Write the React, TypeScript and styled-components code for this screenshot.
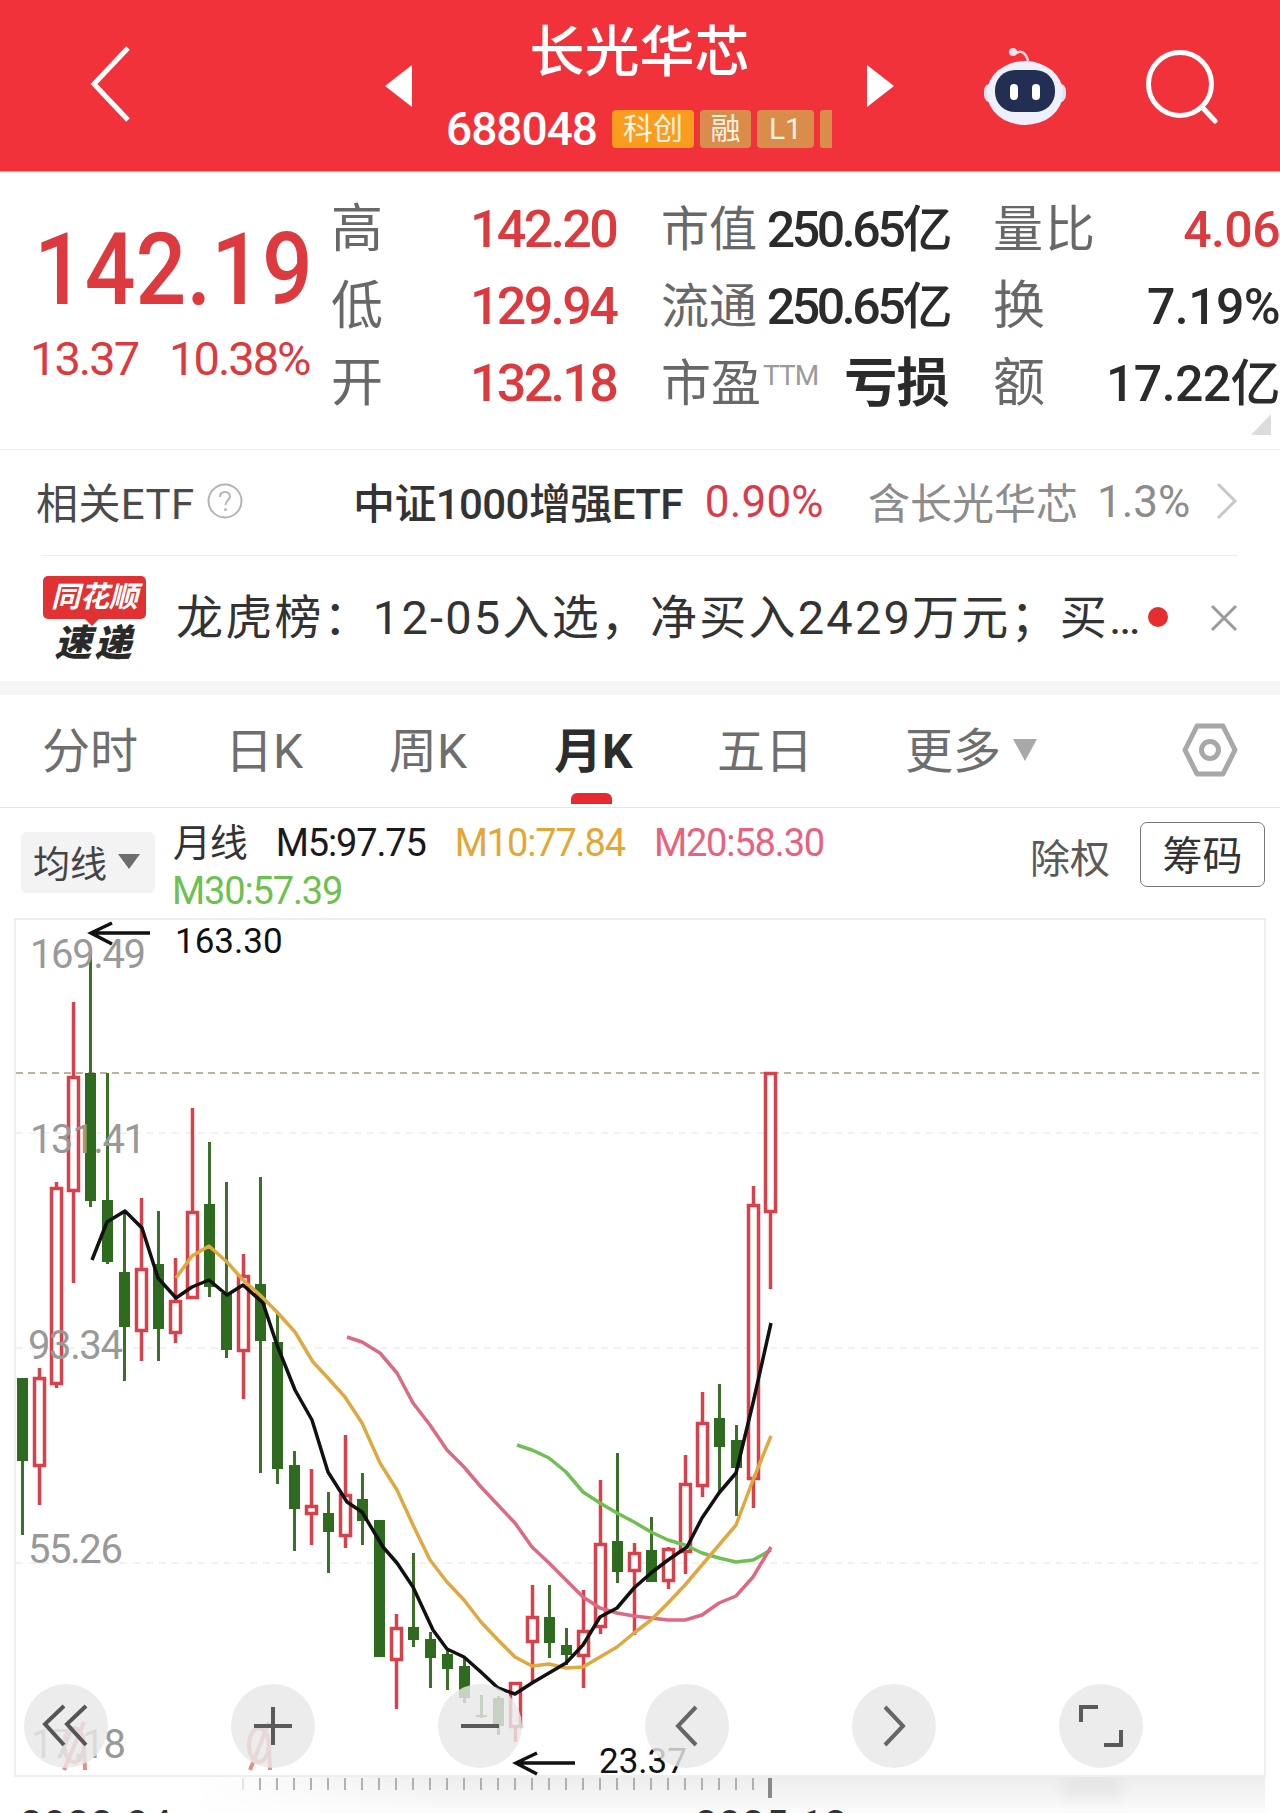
import styled, { createGlobalStyle } from "styled-components";

const GlobalStyle = createGlobalStyle`
  html, body {
    margin: 0;
    padding: 0;
    background: #fff;
  }
  body {
    font-family: Roboto, "Noto Sans CJK SC", sans-serif;
  }
`;

const Page = styled.div`
  width: 1280px;
  height: 1813px;
  overflow: hidden;
  background: #fff;
`;

/* ---------- header ---------- */
const Header = styled.header`
  height: 171px;
  background: #f2323a;
  display: grid;
  grid-template-columns: 385px 27px 455px 27px 1fr;
  align-items: center;
  box-shadow: 0 1px 1px rgba(160, 40, 40, 0.4);
`;

const BackCell = styled.div`
  padding-left: 88px;
  display: flex;
  margin-top: -3px;
`;

const CenterCell = styled.div`
  display: flex;
  flex-direction: column;
  align-items: center;
  color: #fff;
`;

const Title = styled.div`
  font-size: 55px;
  line-height: 62px;
  font-weight: 500;
  margin-top: -1px;
`;

const CodeRow = styled.div`
  display: flex;
  align-items: center;
  margin-top: 26px;
  padding-left: 5px;
  height: 40px;
`;

const Code = styled.span`
  font-size: 46px;
  letter-spacing: -1px;
  font-weight: 500;
  margin-right: 15px;
`;

const Tag = styled.span<{ $w: number; $main?: boolean }>`
  width: ${(p) => p.$w}px;
  height: 38px;
  box-sizing: border-box;
  background: ${(p) => (p.$main ? "#fa9c1e" : "#da8c4a")};
  border-radius: ${(p) => (p.$w < 20 ? "3px 0 0 3px" : "4px")};
  margin-right: 6px;
  color: #fff2e0;
  font-size: 30px;
  line-height: 38px;
  text-align: center;
  overflow: hidden;
`;

const HeaderRight = styled.div`
  display: flex;
  align-items: center;
  padding-left: 89px;
  gap: 79px;
`;

const SearchWrap = styled.span`
  display: flex;
  margin-top: 5px;
`;

/* ---------- quote ---------- */
const Quote = styled.section`
  position: relative;
  height: 279px;
  box-sizing: border-box;
  border-bottom: 1px solid #eeeeee;
  display: flex;
  padding-top: 20px;
`;

const PriceBlock = styled.div`
  width: 331px;
  flex-shrink: 0;
  color: #dc3a3e;
`;

const Price = styled.div`
  font-size: 101px;
  line-height: 110px;
  font-weight: 500;
  margin: 24px 0 0 34px;
  transform: scaleX(0.885);
  transform-origin: left center;
  white-space: nowrap;
`;

const Change = styled.div`
  display: flex;
  gap: 31px;
  padding-left: 30px;
  margin-top: 6px;
  font-size: 47px;
  line-height: 56px;
  letter-spacing: -2px;
  white-space: nowrap;
`;

const QuoteGrid = styled.div`
  display: grid;
  grid-template-columns: 139px 191px 332px 287px;
  grid-auto-rows: 77px;
  align-items: center;
`;

const Label = styled.span<{ $size?: number; $ls?: number }>`
  font-size: ${(p) => p.$size ?? 48}px;
  letter-spacing: ${(p) => p.$ls ?? 0}px;
  line-height: 56px;
  color: #686868;
  white-space: nowrap;
`;

const Sup = styled.sup`
  font-size: 28px;
  line-height: 0;
  color: #9a9a9a;
  letter-spacing: -1px;
  vertical-align: 16px;
  margin-left: 2px;
`;

const RedValue = styled.span`
  font-size: 52px;
  line-height: 56px;
  letter-spacing: -2.7px;
  font-weight: 500;
  color: #dc3a3e;
`;

const Metric = styled.div<{ $pad?: number }>`
  display: flex;
  justify-content: space-between;
  align-items: center;
  padding-right: ${(p) => p.$pad ?? 0}px;
  white-space: nowrap;
`;

const Value = styled.span<{ $red?: boolean; $bold?: boolean; $ls?: number; $size?: number }>`
  font-size: ${(p) => p.$size ?? 50}px;
  line-height: 56px;
  letter-spacing: ${(p) => p.$ls ?? -0.6}px;
  font-weight: ${(p) => (p.$bold ? 700 : 500)};
  color: ${(p) => (p.$red ? "#dc3a3e" : "#2b2b2b")};
`;

const CornerMark = styled.div`
  position: absolute;
  right: 9px;
  bottom: 14px;
  width: 0;
  height: 0;
  border-style: solid;
  border-width: 0 0 21px 20px;
  border-color: transparent transparent #dcdcdc transparent;
`;

/* ---------- etf + news ---------- */
const EtfRow = styled.div`
  height: 105px;
  padding-bottom: 4px;
  box-sizing: border-box;
  display: grid;
  grid-template-columns: 354px 514px 1fr;
  align-items: center;
  font-size: 42px;
  white-space: nowrap;
`;

const EtfTitle = styled.div`
  display: flex;
  align-items: center;
  padding-left: 36px;
  color: #4a4a4a;
  gap: 12px;
  letter-spacing: 0.4px;
`;

const EtfName = styled.div`
  display: flex;
  align-items: center;
  gap: 22px;
  color: #333;
  font-weight: 500;
  letter-spacing: -0.6px;
  margin-left: -1px;
`;

const EtfPct = styled.span`
  color: #dc3a4a;
  font-weight: 400;
  font-size: 44px;
  letter-spacing: 0.2px;
  margin-top: 3px;
`;

const EtfHold = styled.div`
  display: flex;
  align-items: center;
  gap: 19px;
  padding-right: 42px;
  color: #8c8c8c;
`;

const EtfHoldPct = styled.span`
  font-size: 44px;
  margin-top: 3px;
`;

const EtfChevron = styled.span`
  margin-left: auto;
  display: flex;
`;

const Rule = styled.div`
  height: 1px;
  margin: 0 42px 0 41px;
  background: #eeeeee;
`;

const NewsRow = styled.div`
  height: 125px;
  display: flex;
  align-items: center;
  padding: 0 42px 0 43px;
  white-space: nowrap;
`;

const Logo = styled.div`
  width: 103px;
  flex-shrink: 0;
  display: flex;
  flex-direction: column;
  align-items: center;
  margin-top: 2px;
`;

const LogoBubble = styled.div`
  position: relative;
  width: 103px;
  height: 43px;
  background: #e03232;
  border-radius: 5px;
  color: #fff;
  font-size: 29px;
  line-height: 42px;
  font-weight: 700;
  font-style: italic;
  text-align: center;

  &::after {
    content: "";
    position: absolute;
    left: 42px;
    bottom: -7px;
    border-style: solid;
    border-width: 7px 7px 0 7px;
    border-color: #e03232 transparent transparent transparent;
  }
`;

const LogoSub = styled.div`
  color: #2a2a2a;
  font-size: 37px;
  line-height: 40px;
  font-weight: 900;
  font-style: italic;
  letter-spacing: 3px;
  margin-top: 5px;
`;

const NewsText = styled.div`
  font-size: 47px;
  line-height: 56px;
  color: #333;
  margin: -1px 0 0 30px;
  width: 972px;
  flex-shrink: 0;
  letter-spacing: 2.2px;
`;

const NewsDot = styled.span`
  width: 20px;
  height: 20px;
  border-radius: 50%;
  background: #e62e2e;
  flex-shrink: 0;
  margin-top: -4px;
`;

const NewsClose = styled.span`
  margin-left: auto;
  display: flex;
  margin-top: -2px;
`;

const Band = styled.div`
  height: 14px;
  background: #f5f5f5;
`;

/* ---------- tabs ---------- */
const Tabs = styled.nav`
  height: 113px;
  box-sizing: border-box;
  border-bottom: 1px solid #e6e6e6;
  display: flex;
  align-items: center;
  padding: 0 42px 0 42px;
`;

const Tab = styled.div<{ $w: number; $active?: boolean }>`
  position: relative;
  width: ${(p) => p.$w}px;
  flex-shrink: 0;
  display: flex;
  align-items: center;
  font-size: 48px;
  line-height: 56px;
  letter-spacing: ${(p) => (p.$active ? "0" : "0")};
  font-weight: ${(p) => (p.$active ? 700 : 400)};
  color: ${(p) => (p.$active ? "#2c2c2c" : "#6e6e6e")};
  margin-top: 2px;

  &::after {
    content: "";
    display: ${(p) => (p.$active ? "block" : "none")};
    position: absolute;
    left: 17px;
    top: 69px;
    width: 41px;
    height: 11px;
    border-radius: 6px 6px 0 0;
    background: #e82a30;
  }
`;

const TabCaret = styled.span`
  margin-left: 12px;
  margin-top: -4px;
  width: 0;
  height: 0;
  border-style: solid;
  border-width: 22px 12px 0 12px;
  border-color: #a8a8a8 transparent transparent transparent;
`;

const TabSettings = styled.span`
  margin-left: auto;
  display: flex;
  margin-top: -2px;
`;

/* ---------- moving average row ---------- */
const MaRow = styled.div`
  height: 110px;
  display: flex;
  padding: 10px 15px 0 21px;
  box-sizing: border-box;
`;

const MaSelect = styled.div`
  width: 134px;
  height: 61px;
  margin-top: 14px;
  flex-shrink: 0;
  box-sizing: border-box;
  background: #f3f3f3;
  border-radius: 6px;
  display: flex;
  align-items: center;
  padding: 0 0 2px 12px;
  gap: 11px;
  font-size: 37px;
  color: #444;
`;

const MaCaret = styled.span`
  width: 0;
  height: 0;
  border-style: solid;
  border-width: 15px 11px 0 11px;
  border-color: #6c6c6c transparent transparent transparent;
`;

const MaList = styled.div`
  width: 680px;
  margin: 1px 0 0 17px;
  display: flex;
  flex-wrap: wrap;
  column-gap: 29px;
  align-items: center;
  align-content: flex-start;
`;

const MaItem = styled.span<{ $color: string; $first?: boolean }>`
  font-size: 38px;
  line-height: 48px;
  letter-spacing: -1.15px;
  color: ${(p) => p.$color};
  white-space: nowrap;
  margin-left: ${(p) => (p.$first ? 1 : 0)}px;
`;

const MaBreak = styled.span`
  flex-basis: 100%;
  height: 0;
`;

const MaTools = styled.div`
  margin-left: auto;
  display: flex;
  align-items: flex-start;
`;

const ExRight = styled.span`
  font-size: 40px;
  line-height: 56px;
  margin-top: 14px;
  color: #5a5a5a;
`;

const ChipButton = styled.span`
  width: 125px;
  height: 65px;
  margin: 4px 0 0 30px;
  box-sizing: border-box;
  border: 1px solid #777;
  border-radius: 7px;
  font-size: 40px;
  line-height: 67px;
  text-align: center;
  color: #333;
`;

/* ---------- chart ---------- */
const ChartFrame = styled.div`
  position: relative;
  height: 859px;
  margin: 0 14px;
  box-sizing: border-box;
  border: 2px solid #eeeeee;
`;

const ChartSvg = styled.svg`
  display: block;
  overflow: visible;
`;

const AxisLabel = styled.span<{ $top: number; $left: number }>`
  position: absolute;
  left: ${(p) => p.$left}px;
  top: ${(p) => p.$top}px;
  font-size: 40px;
  line-height: 46px;
  letter-spacing: -1.4px;
  color: #999;
`;

const Annotation = styled.span<{ $top: number; $left: number }>`
  position: absolute;
  left: ${(p) => p.$left}px;
  top: ${(p) => p.$top}px;
  font-size: 35px;
  line-height: 40px;
  color: #111;
`;

const ToolBar = styled.div`
  position: absolute;
  left: 8px;
  top: 764px;
  display: flex;
  gap: 123px;
`;

const ToolButton = styled.span`
  width: 84px;
  height: 84px;
  border-radius: 50%;
  background: rgba(232, 232, 232, 0.82);
  display: flex;
  align-items: center;
  justify-content: center;
`;

/* ---------- time axis ---------- */
const TimeAxis = styled.div`
  position: relative;
  height: 36px;
  overflow: hidden;
  background:
    linear-gradient(to right, #fff 15%, rgba(255, 255, 255, 0) 35%, rgba(255, 255, 255, 0) 98.8%, #fff 98.8%),
    linear-gradient(#ededed, #fbfbfb);
`;

const TickRow = styled.div`
  height: 29px;
  box-sizing: border-box;
  display: flex;
  align-items: flex-start;
  padding-left: 242px;
  gap: 15px;
  padding-top: 1px;
`;

const Tick = styled.span<{ $kind?: "faint" | "end" }>`
  width: ${(p) => (p.$kind === "end" ? 4 : 2)}px;
  height: ${(p) => (p.$kind === "end" ? 20 : 12)}px;
  margin-left: ${(p) => (p.$kind === "end" ? -1 : 0)}px;
  background: ${(p) => (p.$kind === "end" ? "#888" : p.$kind === "faint" ? "#e4e4e4" : "#b0b0b0")};
`;

const DateRow = styled.div`
  display: flex;
  padding-left: 20px;
  font-size: 40px;
  line-height: 40px;
  letter-spacing: 1px;
  color: #333;
`;

const DateText = styled.span<{ $w?: number }>`
  width: ${(p) => p.$w ?? 100}px;
  flex-shrink: 0;
`;

const Smudge = styled.span`
  position: absolute;
  left: 1064px;
  top: -8px;
  width: 56px;
  height: 28px;
  background: #e6e6e6;
  filter: blur(6px);
`;

/* ---------- chart data, in page pixels ---------- */
type Candle = [number, "r" | "g", number, number, number, number];

// x, colour, wick top, body top, body bottom, wick bottom
const candles: Candle[] = [
  [22.5, "g", 1378, 1378, 1461, 1535],
  [39.5, "r", 1368, 1377, 1467, 1505],
  [56.5, "r", 1182, 1187, 1385, 1388],
  [73.5, "r", 1002, 1076, 1192, 1283],
  [90.5, "g", 953, 1073, 1201, 1207],
  [107.5, "g", 1073, 1200, 1262, 1264],
  [124.5, "g", 1210, 1272, 1327, 1381],
  [141.5, "r", 1198, 1268, 1332, 1361],
  [158.5, "g", 1211, 1264, 1329, 1361],
  [175.5, "r", 1258, 1300, 1334, 1343],
  [192.5, "r", 1108, 1211, 1299, 1299],
  [209.5, "g", 1142, 1204, 1287, 1297],
  [226.5, "g", 1182, 1293, 1350, 1358],
  [243.5, "r", 1254, 1275, 1352, 1399],
  [260.5, "g", 1177, 1284, 1341, 1473],
  [277.5, "g", 1312, 1342, 1469, 1484],
  [294.5, "g", 1451, 1465, 1509, 1551],
  [311.5, "r", 1469, 1505, 1515, 1545],
  [328.5, "g", 1492, 1513, 1532, 1573],
  [345.5, "r", 1435, 1494, 1537, 1548],
  [362.5, "g", 1473, 1499, 1521, 1545],
  [379.5, "g", 1520, 1520, 1657, 1657],
  [396.5, "r", 1614, 1627, 1661, 1709],
  [413.5, "g", 1553, 1627, 1640, 1647],
  [430.5, "g", 1632, 1639, 1658, 1688],
  [447.5, "g", 1648, 1654, 1669, 1690],
  [464.5, "g", 1657, 1666, 1698, 1703],
  [481.5, "g", 1695, 1715, 1717, 1718],
  [498.5, "g", 1696, 1698, 1726, 1735],
  [515.5, "r", 1682, 1682, 1728, 1742],
  [532.5, "r", 1585, 1616, 1643, 1683],
  [549.5, "g", 1585, 1617, 1643, 1658],
  [566.5, "g", 1628, 1645, 1655, 1665],
  [583.5, "r", 1590, 1630, 1657, 1688],
  [600.5, "r", 1480, 1543, 1628, 1634],
  [617.5, "g", 1453, 1541, 1572, 1583],
  [634.5, "r", 1543, 1552, 1572, 1635],
  [651.5, "g", 1517, 1550, 1582, 1582],
  [668.5, "r", 1547, 1548, 1582, 1589],
  [685.5, "r", 1455, 1483, 1553, 1574],
  [702.5, "r", 1392, 1422, 1487, 1497],
  [719.5, "g", 1384, 1418, 1447, 1493],
  [736.5, "g", 1425, 1440, 1468, 1516],
  [753.5, "r", 1186, 1204, 1480, 1508],
  [770.5, "r", 1072, 1072, 1213, 1289],
];

const m5 =
  "92,1260 107,1222 125,1211 142,1228 158,1278 176,1298 192,1287 209,1280 227,1295 243,1285 263,1303 277,1345 295,1390 312,1420 328,1472 347,1502 362,1512 383,1547 397,1563 413,1587 433,1630 447,1649 464,1657 482,1673 498,1688 515,1694 532,1683 549,1673 566,1663 583,1645 600,1617 617,1608 634,1588 651,1573 668,1560 687,1547 702,1518 719,1493 736,1473 753,1403 771,1323";
const m10 =
  "176,1278 192,1256 209,1246 227,1262 243,1280 260,1295 277,1312 295,1332 313,1362 328,1378 345,1397 362,1423 380,1463 397,1490 413,1525 430,1560 447,1582 464,1600 481,1622 498,1640 515,1657 532,1666 549,1664 566,1668 583,1667 600,1657 617,1647 634,1633 651,1620 668,1603 685,1585 702,1565 719,1545 736,1525 753,1480 771,1436";
const m20 =
  "347,1337 362,1342 380,1353 397,1373 413,1403 430,1425 447,1450 464,1467 481,1487 498,1505 515,1523 532,1547 549,1563 566,1580 583,1597 600,1608 617,1613 634,1616 651,1618 668,1620 685,1620 702,1615 719,1603 736,1596 753,1577 771,1547";
const m30 =
  "517,1445 532,1450 549,1458 566,1472 583,1492 600,1503 617,1513 634,1522 651,1532 668,1540 685,1545 702,1553 719,1558 736,1562 753,1560 771,1550";

const RED = "#d8404a";
const GREEN = "#2f6b1e";

function CandleMark({ c }: { c: Candle }) {
  const [x, color, top, bodyTop, bodyBottom, bottom] = c;
  if (color === "g") {
    return (
      <g>
        <line x1={x} x2={x} y1={top} y2={bottom} stroke="#3b7029" strokeWidth={3} />
        <rect x={x - 5.5} y={bodyTop} width={11} height={bodyBottom - bodyTop} fill={GREEN} />
      </g>
    );
  }
  return (
    <g>
      <line x1={x} x2={x} y1={top} y2={bodyTop} stroke={RED} strokeWidth={3.5} />
      <line x1={x} x2={x} y1={bodyBottom} y2={bottom} stroke={RED} strokeWidth={3.5} />
      <rect
        x={x - 5}
        y={bodyTop + 1.5}
        width={10}
        height={bodyBottom - bodyTop - 3}
        fill="#fff"
        stroke={RED}
        strokeWidth={3.5}
      />
    </g>
  );
}

function CandleChart() {
  return (
    <ChartSvg width={1248} height={855} viewBox="16 920 1248 855">
      {[1133, 1348, 1563].map((y) => (
        <line key={y} x1={16} x2={1264} y1={y} y2={y} stroke="#e4e4e4" strokeWidth={1} strokeDasharray="7 6" />
      ))}
      <line x1={16} x2={1264} y1={1073} y2={1073} stroke="#bfb29c" strokeWidth={2} strokeDasharray="7 5" />
      {candles.map((c) => (
        <CandleMark key={c[0]} c={c} />
      ))}
      <polyline points={m30} fill="none" stroke="#70bf55" strokeWidth={3.5} strokeLinejoin="round" />
      <polyline points={m20} fill="none" stroke="#dc6a82" strokeWidth={3.5} strokeLinejoin="round" />
      <polyline points={m10} fill="none" stroke="#e0a840" strokeWidth={3.5} strokeLinejoin="round" />
      <polyline points={m5} fill="none" stroke="#111" strokeWidth={3.5} strokeLinejoin="round" />
      <g fill="none" stroke="#111" strokeWidth={3.5}>
        <path d="M150 933H92M112 923L91 933L112 944" />
        <path d="M575 1763H517M537 1753L516 1763L537 1774" />
      </g>
      <g fill="none" stroke="#e58c8c" strokeWidth={4}>
        <ellipse cx={74} cy={1745} rx={10} ry={17} />
        <path d="M84 1722L64 1770M84 1745L85 1770" />
        <ellipse cx={259} cy={1745} rx={10} ry={17} />
        <path d="M269 1722L250 1770M269 1745L270 1770" />
      </g>
    </ChartSvg>
  );
}

function RobotIcon() {
  return (
    <svg width={84} height={78} viewBox="0 0 84 78">
      <path d="M32 7C38 2 43 6 45 14" fill="none" stroke="#f5d8dc" strokeWidth={2.5} />
      <circle cx={30} cy={5} r={4} fill="#f8e4e6" />
      <rect x={1} y={36} width={82} height={20} rx={8} fill="#dfe0f2" />
      <ellipse cx={42} cy={46} rx={38} ry={32} fill="#eef0fb" />
      <rect x={12} y={23} width={60} height={42} rx={20} fill="#232f52" />
      <rect x={27} y={37} width={8} height={16} rx={4} fill="#fff" />
      <rect x={49} y={37} width={8} height={16} rx={4} fill="#fff" />
    </svg>
  );
}

function App() {
  const ticks = Array.from({ length: 31 });
  return (
    <Page>
      <GlobalStyle />
      <Header>
        <BackCell>
          <svg width={46} height={78} viewBox="0 0 46 78">
            <path d="M40 3L6 39L40 75" fill="none" stroke="#fff" strokeWidth={5} />
          </svg>
        </BackCell>
        <svg width={27} height={42} viewBox="0 0 27 42">
          <path d="M27 0V42L0 21Z" fill="#fff" />
        </svg>
        <CenterCell>
          <Title>长光华芯</Title>
          <CodeRow>
            <Code>688048</Code>
            <Tag $w={82} $main>
              科创
            </Tag>
            <Tag $w={51}>融</Tag>
            <Tag $w={57}>L1</Tag>
            <Tag $w={12} />
          </CodeRow>
        </CenterCell>
        <svg width={27} height={42} viewBox="0 0 27 42">
          <path d="M0 0V42L27 21Z" fill="#fff" />
        </svg>
        <HeaderRight>
          <RobotIcon />
          <SearchWrap>
            <svg width={72} height={76} viewBox="0 0 72 76">
              <circle cx={34} cy={34} r={31.5} fill="none" stroke="#fff" strokeWidth={5} />
              <path d="M56 57L69 71" stroke="#fff" strokeWidth={5} strokeLinecap="round" />
            </svg>
          </SearchWrap>
        </HeaderRight>
      </Header>

      <Quote>
        <PriceBlock>
          <Price>142.19</Price>
          <Change>
            <span>13.37</span>
            <span>10.38%</span>
          </Change>
        </PriceBlock>
        <QuoteGrid>
          <Label $size={52}>高</Label>
          <RedValue>142.20</RedValue>
          <Metric $pad={44}>
            <Label>市值</Label>
            <Value $ls={-3.4}>250.65亿</Value>
          </Metric>
          <Metric>
            <Label $size={50} $ls={2}>量比</Label>
            <Value $red>4.06</Value>
          </Metric>

          <Label $size={52}>低</Label>
          <RedValue>129.94</RedValue>
          <Metric $pad={44}>
            <Label>流通</Label>
            <Value $ls={-3.4}>250.65亿</Value>
          </Metric>
          <Metric>
            <Label $size={52}>换</Label>
            <Value>7.19%</Value>
          </Metric>

          <Label $size={52}>开</Label>
          <RedValue>132.18</RedValue>
          <Metric $pad={44}>
            <Label $size={50}>
              市盈<Sup>TTM</Sup>
            </Label>
            <Value $bold $size={53}>亏损</Value>
          </Metric>
          <Metric>
            <Label $size={52}>额</Label>
            <Value>17.22亿</Value>
          </Metric>
        </QuoteGrid>
        <CornerMark />
      </Quote>

      <EtfRow>
        <EtfTitle>
          相关ETF
          <svg width={36} height={36} viewBox="0 0 36 36">
            <circle cx={18} cy={18} r={16.5} fill="none" stroke="#b5b5b5" strokeWidth={2} />
            <path
              d="M13 14C13 10.5 15.5 9 18 9C21 9 23 11 23 13.5C23 17 18.5 17.5 18.5 22"
              fill="none"
              stroke="#b5b5b5"
              strokeWidth={2}
            />
            <circle cx={18.5} cy={26.5} r={1.5} fill="#b5b5b5" />
          </svg>
        </EtfTitle>
        <EtfName>
          中证1000增强ETF
          <EtfPct>0.90%</EtfPct>
        </EtfName>
        <EtfHold>
          含长光华芯
          <EtfHoldPct>1.3%</EtfHoldPct>
          <EtfChevron>
            <svg width={22} height={38} viewBox="0 0 22 38">
              <path d="M2 2L19 19L2 36" fill="none" stroke="#c8c8c8" strokeWidth={3} />
            </svg>
          </EtfChevron>
        </EtfHold>
      </EtfRow>
      <Rule />
      <NewsRow>
        <Logo>
          <LogoBubble>同花顺</LogoBubble>
          <LogoSub>速递</LogoSub>
        </Logo>
        <NewsText>龙虎榜：12-05入选，净买入2429万元；买…</NewsText>
        <NewsDot />
        <NewsClose>
          <svg width={28} height={28} viewBox="0 0 28 28">
            <path d="M2 2L26 26M26 2L2 26" stroke="#9a9a9a" strokeWidth={3} />
          </svg>
        </NewsClose>
      </NewsRow>
      <Band />

      <Tabs>
        <Tab $w={183}>分时</Tab>
        <Tab $w={164}>日K</Tab>
        <Tab $w={165}>周K</Tab>
        <Tab $w={163} $active>
          月K
        </Tab>
        <Tab $w={188}>五日</Tab>
        <Tab $w={140}>
          更多
          <TabCaret />
        </Tab>
        <TabSettings>
          <svg width={56} height={54} viewBox="0 0 56 54">
            <path d="M15 3H41L53 27L41 51H15L3 27Z" fill="none" stroke="#a8a8a8" strokeWidth={5} strokeLinejoin="round" />
            <circle cx={28} cy={27} r={8.5} fill="none" stroke="#a8a8a8" strokeWidth={5} />
          </svg>
        </TabSettings>
      </Tabs>

      <MaRow>
        <MaSelect>
          均线
          <MaCaret />
        </MaSelect>
        <MaList>
          <MaItem $color="#333" $first>月线</MaItem>
          <MaItem $color="#1a1a1a">M5:97.75</MaItem>
          <MaItem $color="#e2a736">M10:77.84</MaItem>
          <MaItem $color="#e8617f">M20:58.30</MaItem>
          <MaBreak />
          <MaItem $color="#6cc14f">M30:57.39</MaItem>
        </MaList>
        <MaTools>
          <ExRight>除权</ExRight>
          <ChipButton>筹码</ChipButton>
        </MaTools>
      </MaRow>

      <ChartFrame>
        <CandleChart />
        <AxisLabel $left={14} $top={12}>169.49</AxisLabel>
        <AxisLabel $left={14} $top={197}>131.41</AxisLabel>
        <AxisLabel $left={12} $top={403}>93.34</AxisLabel>
        <AxisLabel $left={12} $top={607}>55.26</AxisLabel>
        <AxisLabel $left={15} $top={802}>17.18</AxisLabel>
        <Annotation $left={159} $top={2}>163.30</Annotation>
        <Annotation $left={583} $top={822}>23.37</Annotation>
        <ToolBar>
          <ToolButton>
            <svg width={48} height={46} viewBox="0 0 48 46">
              <path d="M22 3L3 21L22 42M44 3L25 21L44 42" fill="none" stroke="#555" strokeWidth={4} />
            </svg>
          </ToolButton>
          <ToolButton>
            <svg width={40} height={40} viewBox="0 0 40 40">
              <path d="M1 20H39M20 1V39" fill="none" stroke="#5a5a5a" strokeWidth={4} />
            </svg>
          </ToolButton>
          <ToolButton>
            <svg width={40} height={40} viewBox="0 0 40 40">
              <path d="M1 20H39" fill="none" stroke="#5a5a5a" strokeWidth={4} />
            </svg>
          </ToolButton>
          <ToolButton>
            <svg width={24} height={42} viewBox="0 0 24 42">
              <path d="M21 2L3 21L21 40" fill="none" stroke="#666" strokeWidth={4} />
            </svg>
          </ToolButton>
          <ToolButton>
            <svg width={24} height={42} viewBox="0 0 24 42">
              <path d="M3 2L21 21L3 40" fill="none" stroke="#666" strokeWidth={4} />
            </svg>
          </ToolButton>
          <ToolButton>
            <svg width={44} height={44} viewBox="0 0 44 44">
              <path d="M2 18V3H19M42 26V41H25" fill="none" stroke="#5a5a5a" strokeWidth={4} />
            </svg>
          </ToolButton>
        </ToolBar>
      </ChartFrame>

      <TimeAxis>
        <Smudge />
        <TickRow>
          <Tick $kind="faint" />
          {ticks.map((_, i) => (
            <Tick key={i} $kind={i === ticks.length - 1 ? "end" : undefined} />
          ))}
        </TickRow>
        <DateRow>
          <DateText $w={675}>2022-04</DateText>
          <DateText $w={200}>2025-12</DateText>
        </DateRow>
      </TimeAxis>
    </Page>
  );
}

export default App;
